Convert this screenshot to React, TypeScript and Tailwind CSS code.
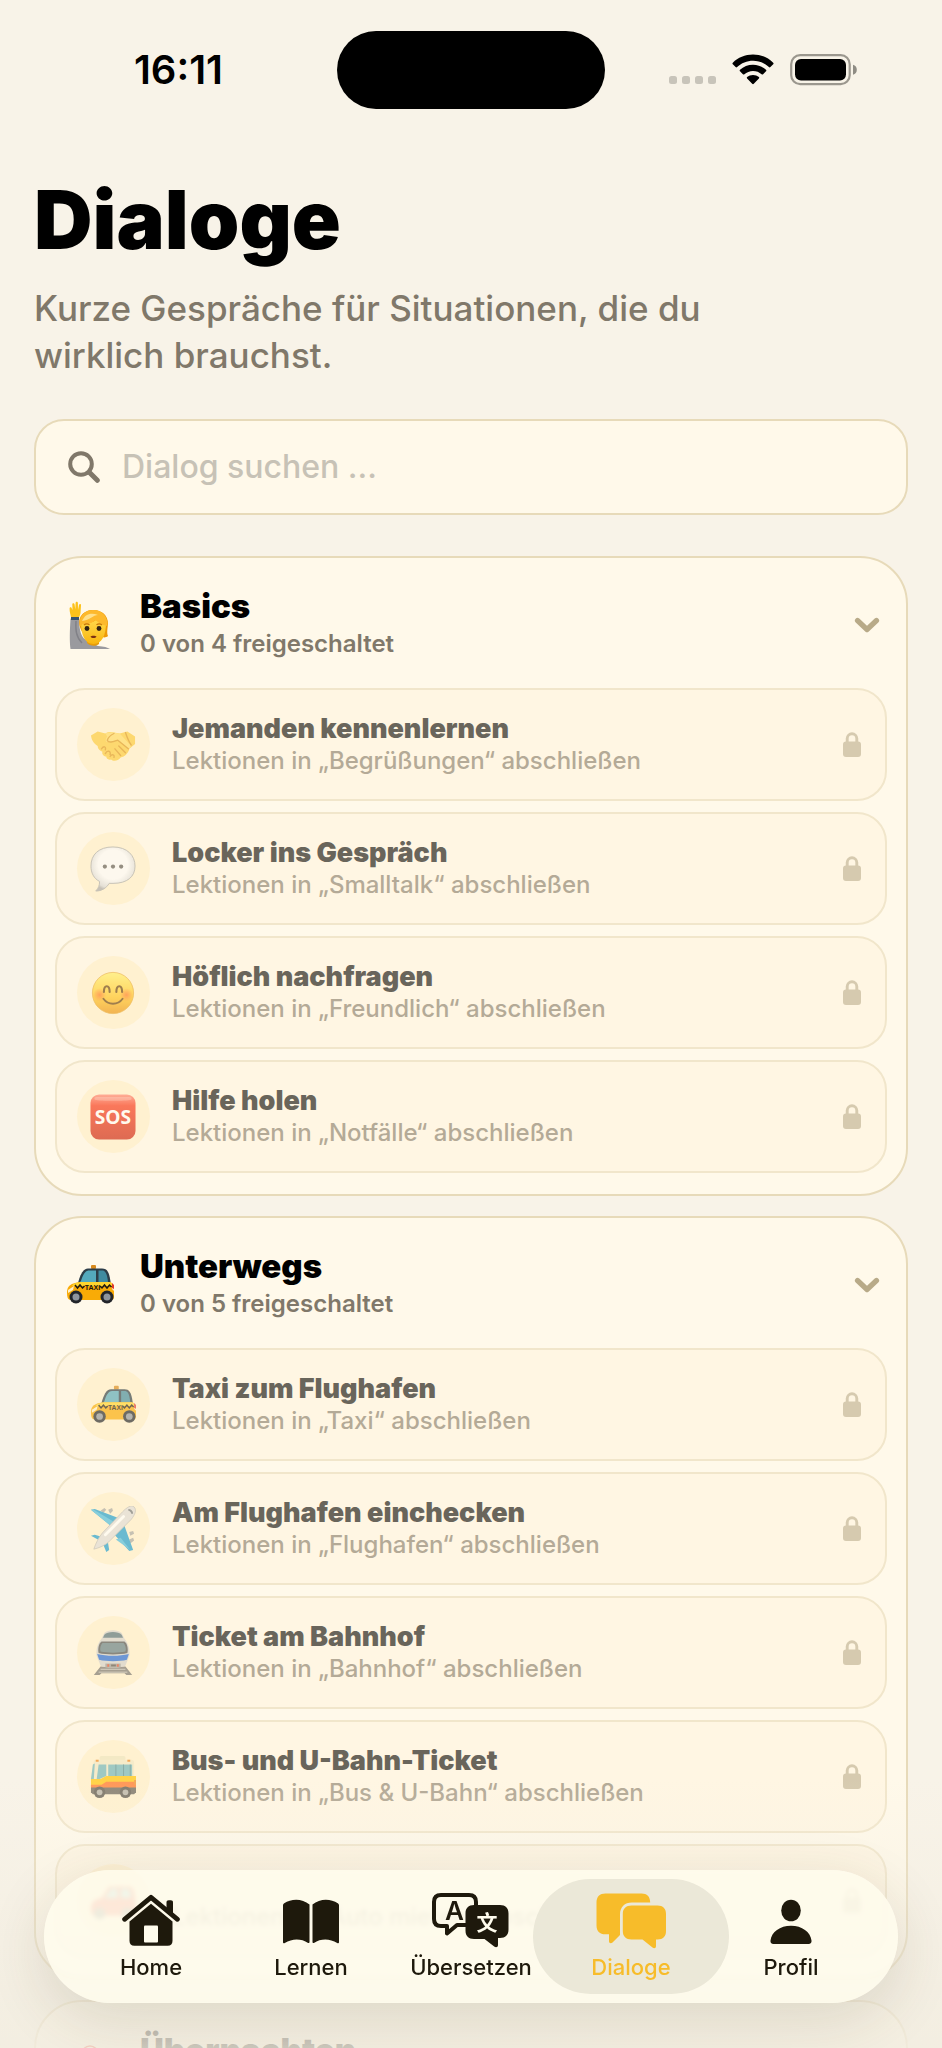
import type { ReactNode } from "react";

type Lesson = { title?: string; topic: string; icon: ReactNode };
type Section = { name: string; total: number; icon: ReactNode; lessons: Lesson[] };

function RaisingHand() {
  return (
    <svg viewBox="0 0 48 48" className="size-12" aria-hidden="true">
      <defs>
        <linearGradient id="skin" x1="0" y1="0" x2="0" y2="1">
          <stop offset="0" stopColor="#ffd84a" />
          <stop offset="1" stopColor="#f9b60f" />
        </linearGradient>
      </defs>
      <path d="M4.500 48c-1-8-.8-17 0-30 .3-2.500 8-2.500 8.500 0 .4 9 1 15 5 19.500l7 4 7 3.500c6 .4 9.500 1.500 12 3z" fill="#9a9a9e" />
      <path d="M10 20c-.5 9 0 16 6 22" stroke="#818187" strokeWidth="1.500" fill="none" />
      <path d="M21 38h12v5c-3 2.500-9 2.500-12-1z" fill="#e89c0a" />
      <path d="M5 16.500C4.500 13 3.500 11 3.600 7.500c0-1.500 1.900-1.700 2.200 0L6.500 9 6.300 3.500c0-1.700 2-1.700 2.300 0L9.300 8.500 9.600 2c.2-1.700 2.200-1.500 2.300.2L12 9l1-5c.4-1.500 2.200-1.100 2 .5L14.500 12c-.3 2-1.300 3.500-1.500 5-2 1.500-6 1.500-8-.5z" fill="#fcc21b" />
      <path d="M5 16h8v3H5z" fill="#36536e" />
      <path d="M14 26c-3-9 3-17 13-17 11 0 17 8 14.500 18-.4 4-.4 6 .5 8-3 2.500-6 1.500-7-1H19c-2-2-4-4-5-8z" fill="#ee9a08" />
      <path d="M15 22c0 12 4 21 12.500 21S40 34 40 22c-4 0-7-1-10-3-4 3-10 4-15 3z" fill="url(#skin)" />
      <path d="M14 26c-2-10 4-17 13-17 9 0 15 6 14.500 16-4-.5-9-3-12-6-3 3-9 5-13 4-1 1-1.500 2-2.500 3z" fill="#fdb92d" />
      <path d="M16 20c3-7 9-9 16-6-5 0-8 5-16 6z" fill="#ffe08a" />
      <circle cx="21" cy="27.500" r="2.400" fill="#332413" />
      <circle cx="33" cy="27.500" r="2.400" fill="#332413" />
      <path d="M18 24c1.500-1.300 4-1.300 5.500-.2M30.500 23.800c1.500-1.100 4-1.100 5.500.2" stroke="#c8780a" strokeWidth="1.200" fill="none" />
      <path d="M24.500 35.500c1-1 5-1 6 0-1 2-5 2-6 0z" fill="#7a2f12" />
    </svg>
  );
}

function Taxi({ className }: { className: string }) {
  return (
    <svg viewBox="0 0 48 48" className={className} aria-hidden="true">
      <rect x="25" y="4" width="5" height="4" rx="1" fill="#d98a1c" />
      <path d="M12 22c2-8 5-14.500 10-14.500h14c5 0 7 3 8.500 13l.5 6H11z" fill="#2d3d48" />
      <path d="M15 20c2-6 4-10.500 8-10.500h7V21H14z" fill="#54a9bd" />
      <path d="M32.500 9.500H36c3 0 5 2 6 11.500h-9.500z" fill="#3f8ba0" />
      <path d="M1 31c0-6 4-9 13-10h29c3 0 5 3 5 8v7c0 2-1 3-3 3H5c-3 0-4-2-4-8z" fill="#f9ab06" />
      <path d="M7 23.500c3-2 7-2.500 11-2.500h25c2 0 3 1 4 4H6z" fill="#ffd52e" />
      <path d="M2 29l6-4-1 4-5 3zM46 24h2v6l-2-2z" fill="#fff0c9" />
      <path d="M46 22l2 2v4l-2-1z" fill="#e33a2c" />
      <path d="M9 24l2.500 3 2.500-3 2.500 3 2-2M34 25l2 2 2.500-3 2.500 3 2.500-3 2 2" stroke="#201a10" strokeWidth="1.500" fill="none" />
      <text x="26.500" y="29" textAnchor="middle" fontSize="7" fontWeight="700" fontFamily="Liberation Sans, sans-serif" fill="#1a160e">TAXI</text>
      <circle cx="10" cy="36" r="6.500" fill="#22252a" />
      <circle cx="10" cy="36" r="3.500" fill="#8f959c" />
      <circle cx="41" cy="36" r="6.500" fill="#22252a" />
      <circle cx="41" cy="36" r="3.500" fill="#8f959c" />
    </svg>
  );
}

function Handshake() {
  return (
    <svg viewBox="0 0 48 48" className="size-[46px]" aria-hidden="true">
      <path d="M1 14l7-4 8 2c3-2 6-2 9-1l6 1 8-2 8 5v8l-6 5c0 3-5 9-9 9-3 4-8 4-10 2-3 1-5-1-5-3-3 0-5-3-4-5-3-1-5-3-5-6-4-3-6-5-7-11z" fill="#fdcb3c" />
      <path d="M16 12c4-2 8-1 15 0l11 12c2 4-3 4-4 2l-9-7c-3-1-5 2-9 2-5 0-4-3-2-6z" fill="#ffdb63" />
      <path d="M25 12c-4 2-6 4-7 7 1 3 6 2 11 0l11 9M30 25l7 7M26 28l6 7M12 28c2-3 5-3 4 1M16 33c2-4 6-3 5 1M21 36c2-3 5-2 4 1M37 11c1 3 3 9 6 13" fill="none" stroke="#dd971b" strokeWidth="1.400" strokeLinecap="round" />
    </svg>
  );
}

function SpeechBubble() {
  return (
    <svg viewBox="0 0 48 48" className="size-[46px]" aria-hidden="true">
      <defs>
        <radialGradient id="bubble" cx=".5" cy=".4" r=".6">
          <stop offset=".55" stopColor="#fdfdff" />
          <stop offset=".9" stopColor="#d8d8da" />
          <stop offset="1" stopColor="#a8a8aa" />
        </radialGradient>
      </defs>
      <path d="M24 1C9 1 1 9 1 21c0 7 3 13 9 16 0 4-1 7-4 10 6 0 11-3 14-8h4c15 0 23-7 23-18S39 1 24 1z" fill="url(#bubble)" stroke="#a9a9a7" strokeWidth="1" />
      <circle cx="15.500" cy="21.500" r="2.200" fill="#5d5a57" />
      <circle cx="24" cy="21.500" r="2.200" fill="#5d5a57" />
      <circle cx="32.500" cy="21.500" r="2.200" fill="#5d5a57" />
    </svg>
  );
}

function Smile() {
  return (
    <svg viewBox="0 0 48 48" className="size-[46px]" aria-hidden="true">
      <defs>
        <linearGradient id="face" x1="0" y1="0" x2="0" y2="1">
          <stop offset="0" stopColor="#fff06a" />
          <stop offset=".6" stopColor="#ffc421" />
          <stop offset="1" stopColor="#ec9310" />
        </linearGradient>
        <radialGradient id="cheek">
          <stop offset="0" stopColor="#ff7a1e" />
          <stop offset="1" stopColor="#ff7a1e" stopOpacity="0" />
        </radialGradient>
      </defs>
      <circle cx="24" cy="24" r="21.500" fill="url(#face)" stroke="#e6a428" strokeWidth=".8" />
      <circle cx="10" cy="26" r="7" fill="url(#cheek)" />
      <circle cx="38" cy="26" r="7" fill="url(#cheek)" />
      <path d="M14.500 23c0-8 6-8 6 0M27.500 23c0-8 6-8 6 0" stroke="#6d4208" strokeWidth="2.200" strokeLinecap="round" fill="none" />
      <path d="M14 30c5 7 15 7 20 0" stroke="#6d4208" strokeWidth="2" strokeLinecap="round" fill="none" />
    </svg>
  );
}

function Sos() {
  return (
    <svg viewBox="0 0 48 48" className="size-[46px]" aria-hidden="true">
      <defs>
        <linearGradient id="sos" x1="0" y1="0" x2="0" y2="1">
          <stop offset="0" stopColor="#ff8a78" />
          <stop offset=".25" stopColor="#f8371d" />
          <stop offset="1" stopColor="#cc2410" />
        </linearGradient>
      </defs>
      <rect x=".5" y=".5" width="47" height="47" rx="9" fill="url(#sos)" />
      <path d="M7 3h34c2 0 3 1 2 3-6 1.500-32 1.500-38 0-1-2 0-3 2-3z" fill="#fff" opacity=".25" />
      <text x="24" y="31.500" textAnchor="middle" fontSize="20" fontWeight="700" fontFamily="Open Sans, sans-serif" fill="#fff">SOS</text>
    </svg>
  );
}

function Plane() {
  return (
    <svg viewBox="0 0 48 48" className="size-[46px]" aria-hidden="true">
      <path d="M11 5l4-3 2 2-3 3zM19 4l4-2 1 3-3 3zM41 27l4-1 1 3-4 2zM41 35l4-2 1 3-4 3z" fill="#a8a8a4" />
      <path d="M1 4l4-1 26 10-4 12zM45 46l-4 1-18-20 12-9zM1 31l4-1 13 4-4 4zM20 46l-3 2-4-10 5-5z" fill="#1c9ed0" />
      <path d="M1 4l3 0 20 12-2 5zM42 46l-10-13-5 2z" fill="#48bce2" />
      <path d="M46 1c3 3 1 8-3 13L20 37c-4 4-11 7-16 8C6 39 9 33 13 28L34 6c4-4 9-8 12-5z" fill="#dfddda" stroke="#b9b6b1" strokeWidth=".8" />
      <path d="M40 4c2 0 4 2 4 4" stroke="#6f7479" strokeWidth="2" fill="none" />
      <path d="M16 30L35 11" stroke="#fff" strokeWidth="3" strokeLinecap="round" />
    </svg>
  );
}

function Train() {
  return (
    <svg viewBox="0 0 48 48" className="size-[46px]" aria-hidden="true">
      <path d="M11 38h26l7 9h-6l-2-2H12l-2 2H4z" fill="#777470" />
      <path d="M11 41h26M9 44h30" stroke="#c8c4bd" strokeWidth="1" />
      <path d="M15 3c4-3.500 14-3.500 18 0l3 6c4 5 6 11 5 18l-4 10c-2 3-24 3-26 0L7 27C6 20 8 14 12 9z" fill="#d3d1ce" />
      <path d="M15 5c3-4 15-4 18 0l1.500 3h-21z" fill="#54717b" />
      <path d="M12 12h24c3 2 4 8 3 12-8 2-22 2-30 0-1-4 0-10 3-12z" fill="#4c4f52" />
      <path d="M13 13.500h22c2 2 3 6 2 9-7 1.500-19 1.500-26 0-1-3 0-7 2-9z" fill="#627e86" />
      <path d="M7.500 25c10 2.500 23 2.500 33 0l-2 6c-8 2-21 2-29 0z" fill="#2068d8" />
      <path d="M16 35h16v4H16z" fill="#9b9894" />
      <path d="M18 37h2M28 37h2" stroke="#e14a2a" strokeWidth="2.500" />
      <path d="M22 37h5" stroke="#554f48" strokeWidth="2" />
    </svg>
  );
}

function Bus() {
  return (
    <svg viewBox="0 0 48 48" className="size-[46px]" aria-hidden="true">
      <rect x="10" y="2" width="27" height="5" rx="2" fill="#eee5c0" />
      <path d="M6 6h37c2 0 3 1 3 3v18H2C2 18 3 10 4 8c0-1 1-2 2-2z" fill="#f2e8c6" />
      <path d="M3 11l2-1-1 16H1zM9 11h8v12l-7 3H7z" fill="#6db4bd" />
      <path d="M19 11h25v12H19z" fill="#6db4bd" />
      <path d="M27 11v12M35 11v12M42 11v12" stroke="#4a868e" strokeWidth="1" />
      <path d="M1 26h10l6-3h31v12H1z" fill="#ffc400" />
      <path d="M1 32h11l5-3h31v7H1z" fill="#ff6a1a" />
      <path d="M1 35h47v5l-2 2H3l-2-2z" fill="#56534d" />
      <path d="M6 6h3v2H6zM39 6h3v2h-3zM46 27h2v5h-2z" fill="#f08218" />
      <circle cx="10" cy="40" r="6" fill="#403e3b" />
      <circle cx="10" cy="40" r="3" fill="#a8a6a2" />
      <circle cx="37" cy="40" r="6" fill="#403e3b" />
      <circle cx="37" cy="40" r="3" fill="#a8a6a2" />
    </svg>
  );
}

function RedCar() {
  return (
    <svg viewBox="0 0 48 48" className="size-[46px]" aria-hidden="true">
      <path d="M1 31c0-6 4-9 11-10l8-12h20c5 0 6 5 7 13l1 12c0 3-1 5-3 5H5c-3 0-4-2-4-8z" fill="#f01608" />
      <path d="M15 21l7-10h7v10zM32 11h7c3 0 4 4 4 10H32z" fill="#6fbcd0" />
      <circle cx="10" cy="37" r="6" fill="#3a4247" />
      <circle cx="39" cy="37" r="6" fill="#3a4247" />
    </svg>
  );
}

function Hotel() {
  return (
    <svg viewBox="0 0 48 48" className="size-12" aria-hidden="true">
      <path d="M2 6h44v42H2z" fill="#f6e4d0" />
      <path d="M2 5h44v5H2z" fill="#f0351f" />
      <circle cx="24" cy="9" r="8" fill="#fff2e4" stroke="#f0351f" strokeWidth="1.500" />
      <path d="M24 4l4 8h-8z" fill="#555" />
    </svg>
  );
}

function Lock() {
  return (
    <svg viewBox="0 0 18 25" className="h-[25px] w-[18px] shrink-0" aria-hidden="true">
      <rect x="0" y="9.500" width="18" height="15.500" rx="3" fill="#d6caaf" />
      <path d="M4.200 11V6.600a4.800 4.800 0 0 1 9.600 0V11" fill="none" stroke="#d6caaf" strokeWidth="2.900" />
    </svg>
  );
}

function Chevron() {
  return (
    <svg viewBox="0 0 26 16" className="h-4 w-[26px] shrink-0" aria-hidden="true">
      <path d="M3.500 3.500l9.500 9 9.500-9" fill="none" stroke="#b8aa88" strokeWidth="5.200" strokeLinecap="round" strokeLinejoin="round" />
    </svg>
  );
}

function HomeIcon() {
  return (
    <svg viewBox="0 0 60 56" className="h-14 w-[60px]" aria-hidden="true">
      <path d="M45.500 18V9.500c0-1.500.7-2.200 2.200-2.200h2.100c1.500 0 2.200.7 2.200 2.200V22z" fill="currentColor" />
      <path d="M3.500 26.300L30 4.300l26.500 22" fill="none" stroke="currentColor" strokeWidth="4.800" strokeLinecap="round" strokeLinejoin="round" />
      <path d="M8.500 28.500L30 10.800l21.500 17.700V48c0 3-1.700 4.800-4.800 4.800H13.300c-3 0-4.800-1.700-4.800-4.800z" fill="currentColor" />
      <rect x="23" y="32.500" width="14" height="17" rx="1" fill="#fffced" />
    </svg>
  );
}

function BookIcon() {
  return (
    <svg viewBox="0 0 60 56" className="h-14 w-[60px]" aria-hidden="true">
      <path d="M28.500 11.500v37.800c0 .8-.8 1-1.400.6-7-4.500-16-4.500-23.300.2-.8.500-1.800.2-1.800-.8V12.500c0-1 .4-1.600 1.200-2.200C10 5.500 21 5 28.500 11.500zM31.500 11.500v37.800c0 .8.800 1 1.400.6 7-4.500 16-4.500 23.300.2.800.5 1.800.2 1.800-.8V12.500c0-1-.4-1.600-1.200-2.200C50 5.500 39 5 31.500 11.500z" fill="currentColor" />
    </svg>
  );
}

function TranslateIcon() {
  return (
    <svg viewBox="0 0 80 58" className="h-[58px] w-20" aria-hidden="true">
      <path d="M10 4h28c4.500 0 7 2.500 7 7v18c0 3-2 5-6 5H26l-10 8.500V35h-6c-4.500 0-7-2.500-7-7V11c0-4.500 2.500-7 7-7z" fill="none" stroke="currentColor" strokeWidth="4" strokeLinejoin="round" />
      <text x="23.500" y="28.500" textAnchor="middle" fontSize="26" fontWeight="600" fontFamily="Inter, sans-serif" fill="currentColor">A</text>
      <path d="M43 14h26c5.500 0 8.500 3 8.500 8.500v16c0 5.500-3 8.500-8.500 8.500h-2v7c0 2.200-2 3-3.800 1.500L53.500 48H43c-5.500 0-8.500-3-8.500-8.500v-17c0-5.500 3-8.500 8.500-8.500z" fill="currentColor" />
      <text x="56" y="38.500" textAnchor="middle" fontSize="21" fontWeight="700" fontFamily="Noto Sans CJK SC, sans-serif" fill="#fffced">文</text>
    </svg>
  );
}

function ChatIcon() {
  return (
    <svg viewBox="0 0 72 58" className="h-[58px] w-[72px]" aria-hidden="true">
      <path d="M10.500 2.500h36c5.500 0 8.700 3.200 8.700 9H37c-7.500 0-12 4.500-12 12v20.500l-7.500 7.500c-1.500 1.500-3.500.8-3.500-1.200v-7h-3.500C4.500 43.300 1.500 40 1.500 34.500V11.500c0-5.800 3.200-9 9-9z" fill="currentColor" />
      <path d="M36.500 14.500h26c5.500 0 8.500 3 8.500 8.500v17c0 5.500-3 8.500-8.500 8.500H61V55c0 2.200-1.800 2.900-3.500 1.500L47.500 48.500h-11c-5.500 0-8.700-3-8.700-8.500V23c0-5.500 3.200-8.500 8.700-8.500z" fill="currentColor" />
    </svg>
  );
}

function PersonIcon() {
  return (
    <svg viewBox="0 0 60 56" className="h-14 w-[60px]" aria-hidden="true">
      <ellipse cx="30" cy="17.500" rx="9.800" ry="10.800" fill="currentColor" />
      <path d="M9.500 47.500C10.500 39 19 32.800 30 32.800S49.500 39 50.500 47.500c.3 2.300-.8 3.500-3 3.500h-35c-2.200 0-3.300-1.200-3-3.500z" fill="currentColor" />
    </svg>
  );
}

const sections: Section[] = [
  {
    name: "Basics",
    total: 4,
    icon: <RaisingHand />,
    lessons: [
      { title: "Jemanden kennenlernen", topic: "Begrüßungen", icon: <Handshake /> },
      { title: "Locker ins Gespräch", topic: "Smalltalk", icon: <SpeechBubble /> },
      { title: "Höflich nachfragen", topic: "Freundlich", icon: <Smile /> },
      { title: "Hilfe holen", topic: "Notfälle", icon: <Sos /> },
    ],
  },
  {
    name: "Unterwegs",
    total: 5,
    icon: <Taxi className="size-12" />,
    lessons: [
      { title: "Taxi zum Flughafen", topic: "Taxi", icon: <Taxi className="size-[46px]" /> },
      { title: "Am Flughafen einchecken", topic: "Flughafen", icon: <Plane /> },
      { title: "Ticket am Bahnhof", topic: "Bahnhof", icon: <Train /> },
      { title: "Bus- und U-Bahn-Ticket", topic: "Bus & U-Bahn", icon: <Bus /> },
      { topic: "Auto mieten", icon: <RedCar /> },
    ],
  },
  { name: "Übernachten", total: 4, icon: <Hotel />, lessons: [] },
];

const tabs = [
  { label: "Home", icon: <HomeIcon /> },
  { label: "Lernen", icon: <BookIcon /> },
  { label: "Übersetzen", icon: <TranslateIcon /> },
  { label: "Dialoge", icon: <ChatIcon />, active: true },
  { label: "Profil", icon: <PersonIcon /> },
];

function StatusBar() {
  return (
    <div className="grid h-[139px] grid-cols-[1fr_268px_1fr] items-center">
      <div className="pl-5 text-center text-[40px] font-semibold text-black">16:11</div>
      <div className="h-[78px] rounded-full bg-black" />
      <div className="flex items-center gap-4 pl-16">
        <svg viewBox="0 0 47 32" className="h-8 w-[47px]" aria-hidden="true">
          {[0, 13, 26, 39].map((x) => (
            <rect key={x} x={x} y="22" width="8" height="8" rx="2.500" fill="#c8c4ba" />
          ))}
        </svg>
        <svg viewBox="0 0 42 32" className="h-8 w-[42px]" aria-hidden="true">
          <path d="M21 .5C13 .5 6 3.500.8 8.700c-.5.500-.5 1 0 1.500l2.800 2.800c.5.500 1 .5 1.500 0C9.300 9 15 6.700 21 6.700s11.700 2.300 15.900 6.300c.5.500 1 .5 1.500 0l2.800-2.800c.5-.5.500-1 0-1.500C36 3.500 29 .5 21 .5z" />
          <path d="M21 10.700c-5 0-9.500 1.900-13 5.100-.5.500-.5 1 0 1.500l2.900 2.900c.5.500 1 .5 1.500 0 2.300-2 5.300-3.300 8.600-3.300s6.300 1.200 8.600 3.300c.5.500 1 .5 1.500 0l2.900-2.900c.5-.5.500-1 0-1.500-3.500-3.200-8-5.100-13-5.100z" />
          <path d="M21 21c-2.300 0-4.300.8-5.900 2.100-.5.500-.5 1 0 1.500l5.100 5.200c.5.500 1.100.5 1.600 0l5.100-5.200c.5-.5.500-1 0-1.500C25.300 21.800 23.300 21 21 21z" />
        </svg>
        <svg viewBox="0 0 67 32" className="h-8 w-[67px]" aria-hidden="true">
          <rect x="1.200" y="1.200" width="58.500" height="29" rx="9" fill="none" stroke="#9b978e" strokeWidth="2.200" />
          <rect x="5" y="5" width="51" height="21.500" rx="6" />
          <path d="M63 10.800c2.500.5 3.800 2.500 3.800 5s-1.300 4.500-3.800 5z" fill="#8f8c84" />
        </svg>
      </div>
    </div>
  );
}

function LessonRow({ title, topic, icon }: Lesson) {
  return (
    <li>
      <button
        type="button"
        className="flex w-full items-center gap-[22px] rounded-[30px] border-2 border-[#f1e6cb] bg-[#fff6e3] py-[18px] pr-6 pl-5 text-left"
      >
        <span className="flex size-[73px] shrink-0 items-center justify-center rounded-full bg-[#fff1d0] pr-0.5">
          <span className="flex opacity-65">{icon}</span>
        </span>
        <span className="min-w-0 flex-1 leading-8">
          <span className="block min-h-8 truncate text-[27px] font-black text-[#69655b]">{title}</span>
          <span className="block truncate text-[24px] font-medium text-[#b4aa97]">
            Lektionen in „{topic}“ abschließen
          </span>
        </span>
        <Lock />
      </button>
    </li>
  );
}

function SectionCard({ name, total, icon, lessons }: Section) {
  return (
    <section className="rounded-[48px] border-2 border-[#e7dab9] bg-[#fff9ea] px-[19px] pb-[21px]">
      <button type="button" className="flex w-full items-center gap-[26px] pt-[30px] pr-[7px] pb-[26px] pl-[11px] text-left">
        <span className="shrink-0">{icon}</span>
        <span className="flex-1 leading-[37px]">
          <span className="block text-[33px] font-black text-black">{name}</span>
          <span className="block text-[24px] font-semibold text-[#80786a]">0 von {total} freigeschaltet</span>
        </span>
        <Chevron />
      </button>
      <ul className="flex flex-col gap-[11px]">
        {lessons.map((lesson) => (
          <LessonRow key={lesson.topic} {...lesson} />
        ))}
      </ul>
    </section>
  );
}

function TabBar() {
  return (
    <nav
      aria-label="Hauptnavigation"
      className="absolute inset-x-[44px] bottom-[45px] flex rounded-full bg-[#fffdee]/80 px-[27px] shadow-[0_16px_60px_rgba(70,60,30,0.14)] backdrop-blur-[2px]"
    >
      {tabs.map((tab) => (
        <a
          key={tab.label}
          href={"#" + tab.label.toLowerCase()}
          aria-current={tab.active ? "page" : undefined}
          className={
            tab.active
              ? "relative flex h-[133px] flex-1 basis-0 flex-col items-center text-[#f7bc2a]"
              : "relative flex h-[133px] flex-1 basis-0 flex-col items-center text-[#1e190c]"
          }
        >
          {tab.active && <span className="absolute -inset-x-[18px] inset-y-[9px] rounded-full bg-[#ebe8d8]" />}
          <span className="relative flex h-[83px] items-end pb-1">{tab.icon}</span>
          <span className="relative text-[22px] leading-7 font-medium">{tab.label}</span>
        </a>
      ))}
    </nav>
  );
}

export default function App() {
  return (
    <div className="relative h-screen overflow-hidden bg-[#f8f3e8] font-['Inter',sans-serif]">
      <main className="h-full overflow-y-auto pb-52 [scrollbar-width:none]">
        <StatusBar />
        <div className="px-[34px] pt-9">
          <h1 className="text-[81px] leading-[90px] font-black text-black">Dialoge</h1>
          <p className="mt-5 max-w-[760px] text-[35px] leading-[47px] font-medium text-[#80786a]">
            Kurze Gespräche für Situationen, die du wirklich brauchst.
          </p>
          <label className="mt-10 flex h-24 items-center gap-[22px] rounded-[30px] border-2 border-[#e7dab9] bg-[#fff9ea] px-8">
            <svg viewBox="0 0 32 32" className="size-8 shrink-0" fill="none" stroke="#80786a" aria-hidden="true">
              <circle cx="13" cy="13" r="10.800" strokeWidth="4" />
              <path d="M21.500 21.500l7.800 7.800" strokeWidth="5" strokeLinecap="round" />
            </svg>
            <input
              type="text"
              aria-label="Dialog suchen"
              placeholder="Dialog suchen ..."
              className="min-w-0 flex-1 bg-transparent text-[32px] font-medium text-black outline-none placeholder:text-[#c7c2b6]"
            />
          </label>
          <div className="mt-[41px] flex flex-col gap-5">
            {sections.map((section) => (
              <SectionCard key={section.name} {...section} />
            ))}
          </div>
        </div>
      </main>
      <div className="pointer-events-none absolute inset-x-0 bottom-0 h-[270px] bg-linear-to-b from-[#f2ede0]/0 via-[#f2ede0]/40 to-[#f2ede0]/85" />
      <TabBar />
    </div>
  );
}
